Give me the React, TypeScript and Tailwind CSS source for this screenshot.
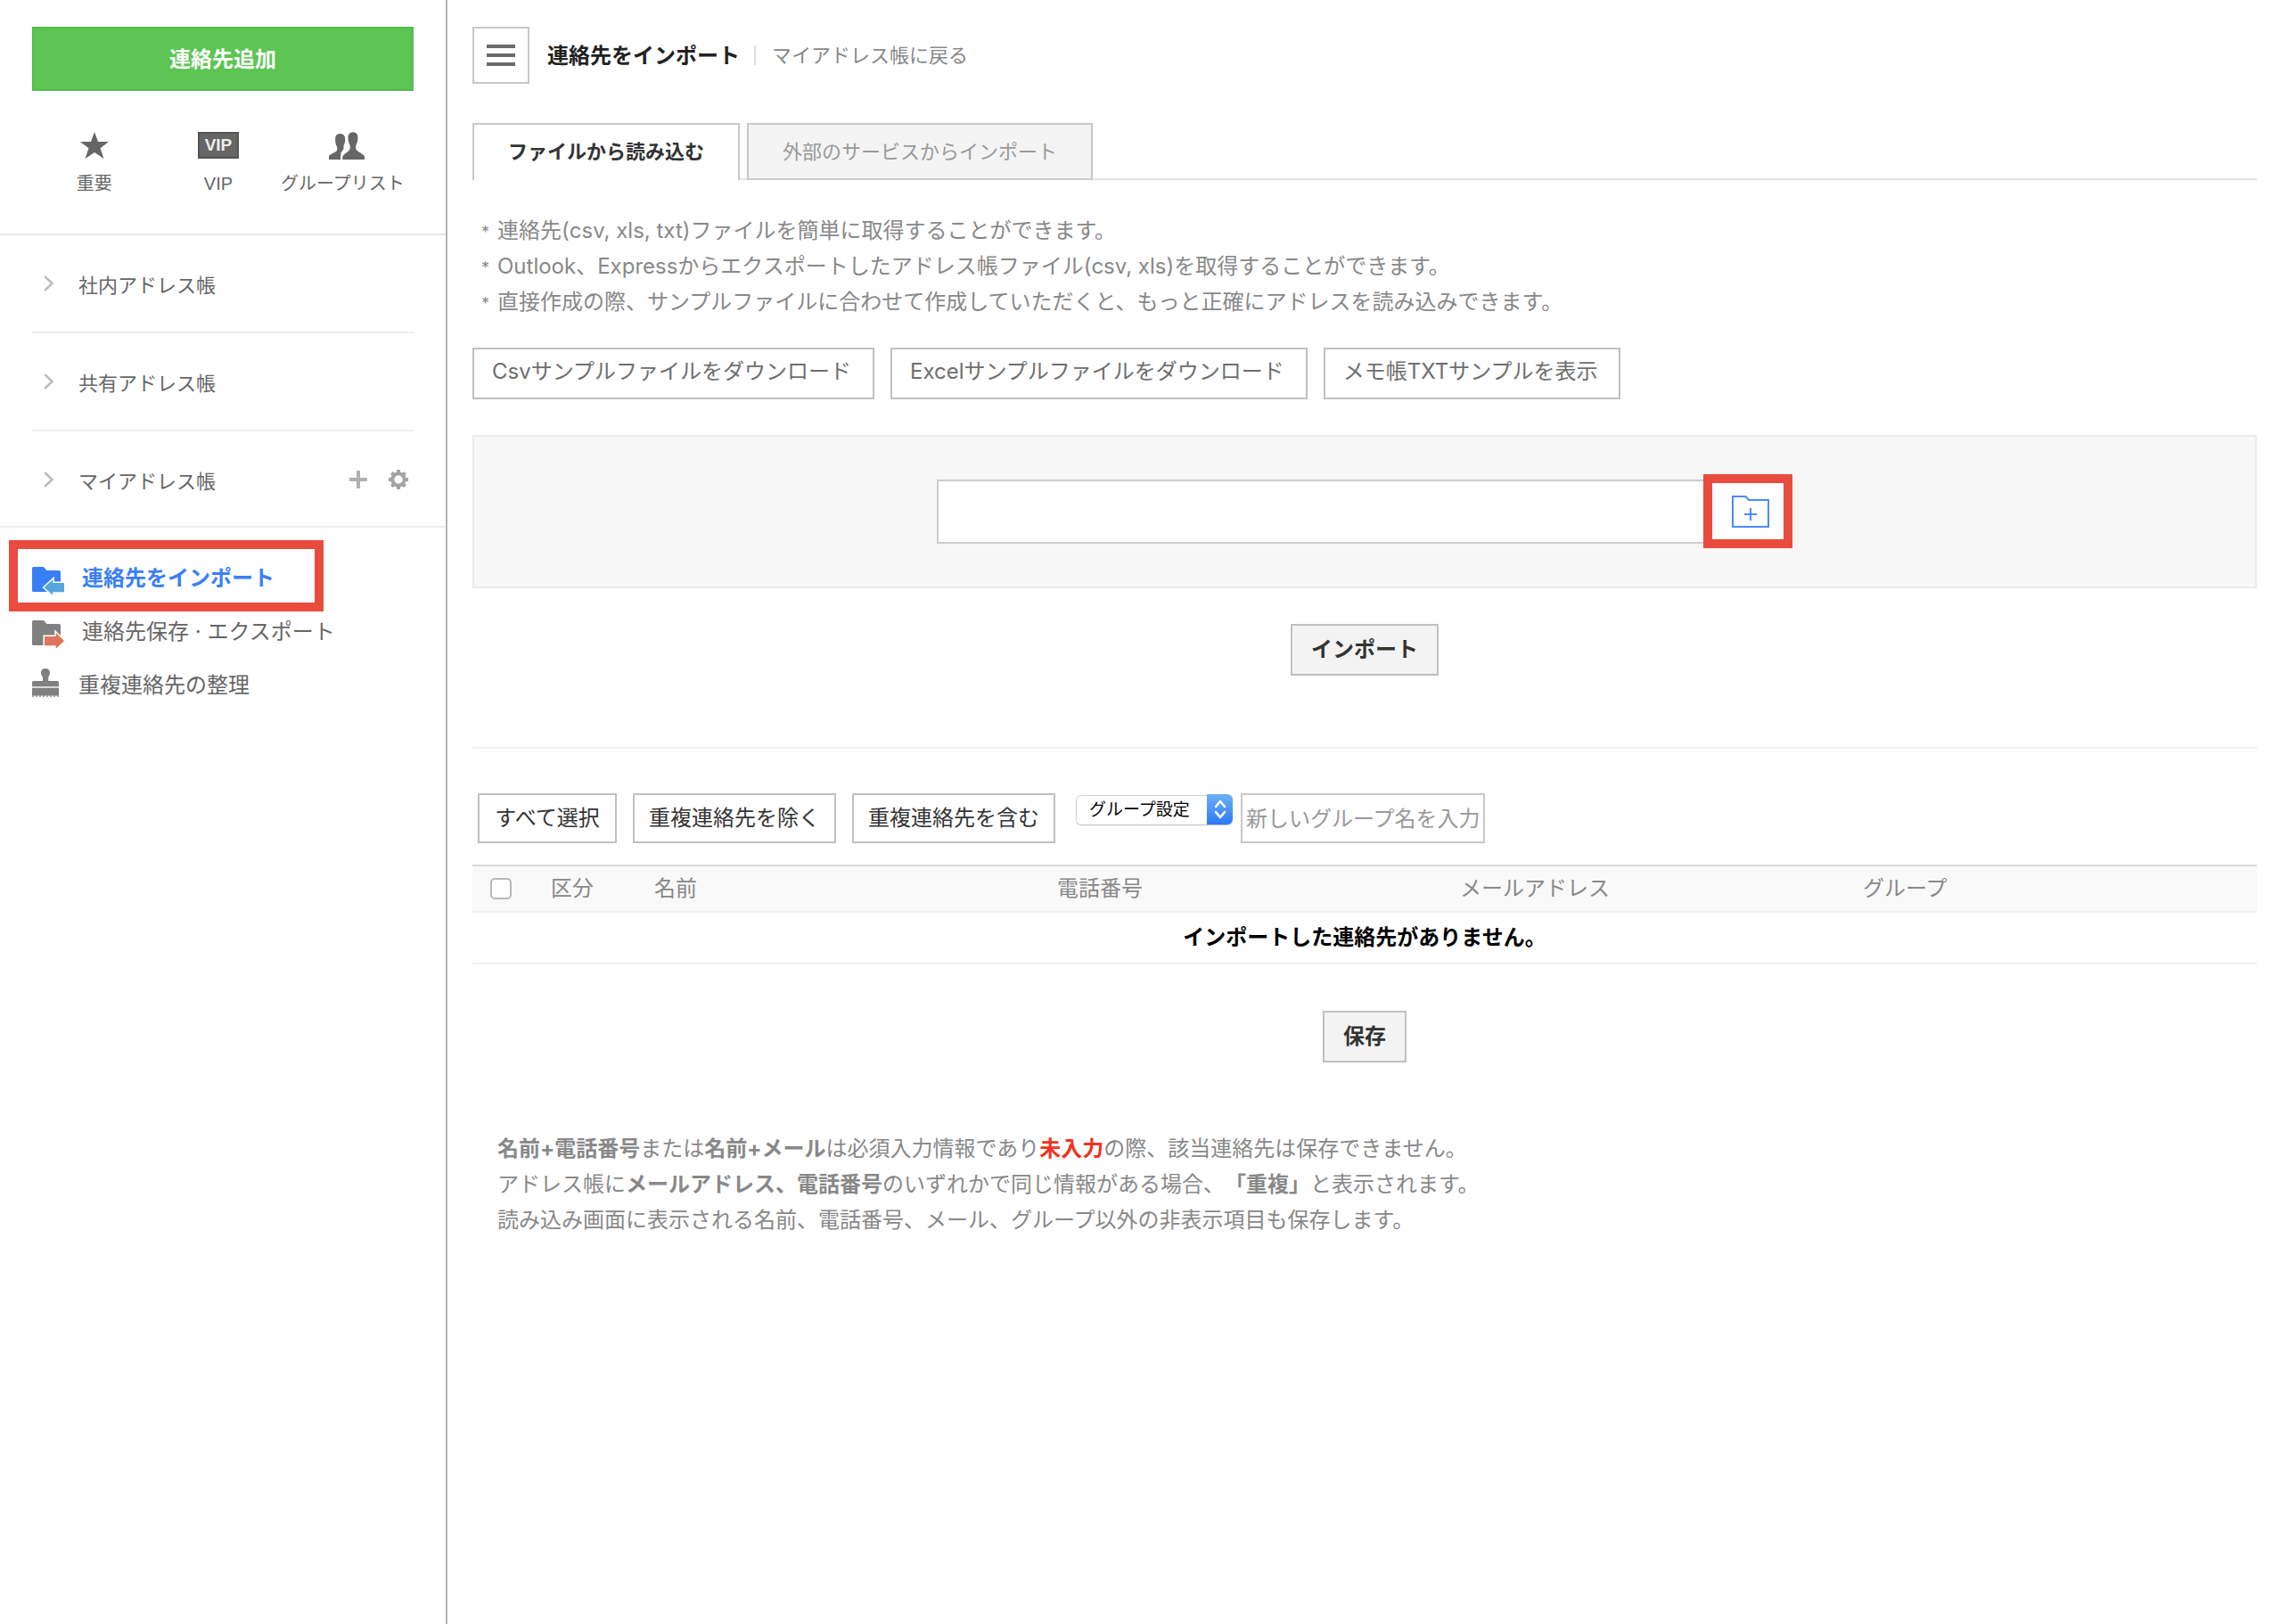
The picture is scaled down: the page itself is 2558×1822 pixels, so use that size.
import React from "react";

const outlineButton =
  "h-[58px] border-2 border-[#c0c0c0] bg-white pb-1 pl-5 pr-6 text-2xl leading-[50px] text-[#6e6e6e] whitespace-nowrap";
const selectionButton =
  "h-14 min-w-[156px] border-2 border-[#c0c0c0] bg-white px-4 text-2xl leading-[52px] text-[#333] whitespace-nowrap";
const solidButton =
  "h-[58px] border-2 border-[#c0c0c0] bg-[#f3f3f3] px-[21px] text-2xl font-bold leading-[54px] text-[#333]";

function StarIcon() {
  return (
    <svg width="32" height="30" viewBox="0 0 32 30" fill="#666" aria-hidden="true">
      <path d="M16 0 20 11H32L22.500 18.200 26.500 30 16 23 5.500 30 9.500 18.200 0 11H12Z" />
    </svg>
  );
}

function GroupIcon() {
  return (
    <svg width="50" height="32" viewBox="0 0 50 32" aria-hidden="true">
      <path
        fill="#666"
        d="M22.500 3C27 3 28.500 6 28.200 10C28 14 27 15 26.500 16.500V20L23.500 24.500L23 32H10V28.500C10.500 26 17 24 18.500 22.500C19.500 21.500 19.500 20 19 17.500C18 16 17.300 14 17.200 11C16.800 6 18 3 22.500 3Z"
      />
      <path
        fill="#666"
        stroke="#fff"
        strokeWidth="1.500"
        d="M37 .5C42 .5 43.500 4 43.200 8.500C43 13 42 14 41 16.500V20C41.500 23 50.500 24.500 51 29V32.800H24.500V29C25 24.500 32.500 23 33 20V16.500C32 14 31 13 30.800 8.500C30.500 4 32 .5 37 .5Z"
      />
    </svg>
  );
}

function ChevronIcon() {
  return (
    <svg width="12" height="20" viewBox="0 0 12 20" fill="none" stroke="#bbb" strokeWidth="2.500" aria-hidden="true">
      <path d="M0 2 8.500 10 0 18" />
    </svg>
  );
}

function PlusIcon() {
  return (
    <svg width="20" height="20" viewBox="0 0 20 20" fill="none" stroke="#b0b0b0" strokeWidth="4" aria-hidden="true">
      <path d="M10 0V20M0 10H20" />
    </svg>
  );
}

function GearIcon() {
  return (
    <svg width="22" height="22" viewBox="0 0 22 22" fill="none" stroke="#a3a3a3" aria-hidden="true">
      <circle cx="11" cy="11" r="6.700" strokeWidth="4" />
      <path
        strokeWidth="4"
        d="M11 0V4M11 18V22M0 11H4M18 11H22M3.400 3.400 6 6M16 16 18.600 18.600M18.600 3.400 16 6M6 16 3.400 18.600"
      />
    </svg>
  );
}

function ImportIcon() {
  return (
    <svg width="36" height="40" viewBox="0 0 36 40" aria-hidden="true">
      <path fill="#3a7ff8" d="M0 9.500Q0 8 1.500 8H13L16.500 12H30.500Q32 12 32 13.500V36H1.500Q0 36 0 34.500Z" />
      <path
        fill="#57a5dd"
        stroke="#fff"
        strokeWidth="1.500"
        d="M12.500 31 24 20.500V25.200H37V37H24V41.500Z"
      />
    </svg>
  );
}

function ExportIcon() {
  return (
    <svg width="36" height="40" viewBox="0 0 36 40" aria-hidden="true">
      <path fill="#808080" d="M0 9.500Q0 8 1.500 8H13L16.500 12H30.500Q32 12 32 13.500V36H1.500Q0 36 0 34.500Z" />
      <path
        fill="#e0745c"
        stroke="#fff"
        strokeWidth="1.500"
        d="M13.200 25.200H26V20L37 31 26 41.500V37H13.200Z"
      />
    </svg>
  );
}

function StampIcon() {
  return (
    <svg width="32" height="40" viewBox="0 0 32 40" fill="#808080" aria-hidden="true">
      <path d="M15 2C18.500 2 20.200 4.500 20 7.500C19.800 9.500 18.500 10.500 18.200 12V16H28.500Q30 16 30 17.500V22H0V17.500Q0 16 1.500 16H12V12C11.500 10.500 10.200 9.500 10 7.500C9.800 4.500 11.500 2 15 2Z" />
      <path fill="#d8d8d8" d="M0 22H30V24H0Z" />
      <path d="M0 24H30V32.500H0Z" />
      <path
        opacity=".7"
        d="M0 32H2V34H0ZM4 32H6V34H4ZM8 32H10V34H8ZM12 32H14V34H12ZM16 32H18V34H16ZM20 32H22V34H20ZM24 32H26V34H24ZM28 32H30V34H28Z"
      />
    </svg>
  );
}

function FolderAddIcon() {
  return (
    <svg width="42" height="36" viewBox="0 0 42 36" fill="none" stroke="#4a8bf8" strokeWidth="2" aria-hidden="true">
      <path d="M1 1H15.500L19 5H41V35H1Z" />
      <path d="M21 14V28M14 21H28" />
    </svg>
  );
}

function QuickLink({ label, children }: { label: string; children: React.ReactNode }) {
  return (
    <a
      href="#"
      className="flex flex-1 flex-col items-center font-['Liberation_Sans','Noto_Sans_CJK_JP',sans-serif] text-xl leading-[30px] text-[#666] whitespace-nowrap"
    >
      <span className="flex h-9 items-center">{children}</span>
      <span className="mt-2.5">{label}</span>
    </a>
  );
}

function BookRow({ label, last, children }: { label: string; last?: boolean; children?: React.ReactNode }) {
  return (
    <li
      className={
        last ? "flex h-[106px] items-center pt-0.5 pl-3.5" : "flex h-[110px] items-center border-b-2 border-[#efefef] pl-3.5"
      }
    >
      <ChevronIcon />
      <a href="#" className="ml-[26px] grow pt-1 text-[22px] leading-8 text-[#666]">
        {label}
      </a>
      {children}
    </li>
  );
}

function Sidebar() {
  return (
    <aside className="w-[502px] shrink-0 border-r-2 border-[#b3b3b5] text-[#666]">
      <div className="px-9 pt-[30px]">
        <button className="h-[72px] w-full border-2 border-[#55bb4c] bg-[#5cc553] pt-0.5 text-2xl font-bold text-white">
          連絡先追加
        </button>
      </div>
      <div className="mt-[43px] flex h-[119px] border-b-2 border-[#e8e8e8] pr-[46px] pl-9">
        <QuickLink label="重要">
          <StarIcon />
        </QuickLink>
        <QuickLink label="VIP">
          <span
            aria-hidden="true"
            className="h-[30px] w-[46px] border-2 border-[#555] bg-[#666] text-center text-[19px] leading-[26px] font-bold text-[#eee]"
          >
            VIP
          </span>
        </QuickLink>
        <QuickLink label="グループリスト">
          <GroupIcon />
        </QuickLink>
      </div>
      <ul className="border-b-2 border-[#efefef] px-9">
        <BookRow label="社内アドレス帳" />
        <BookRow label="共有アドレス帳" />
        <BookRow label="マイアドレス帳" last>
          <button aria-label="グループ追加" className="mr-6">
            <PlusIcon />
          </button>
          <button aria-label="設定" className="mr-1.5">
            <GearIcon />
          </button>
        </BookRow>
      </ul>
      <ul className="px-9 pt-[26px] text-2xl leading-9">
        <li className="relative">
          <a href="#" className="flex h-[60px] items-center gap-5 font-bold text-[#3a7ff8]">
            <ImportIcon />
            <span className="pt-0.5">連絡先をインポート</span>
          </a>
          <span className="pointer-events-none absolute -top-3 -left-[26px] h-20 w-[353px] border-[10px] border-[#e94c3d]" />
        </li>
        <li>
          <a href="#" className="flex h-[60px] items-center gap-5">
            <ExportIcon />
            <span className="pt-0.5">連絡先保存 · エクスポート</span>
          </a>
        </li>
        <li>
          <a href="#" className="flex h-[60px] items-center gap-5">
            <StampIcon />
            <span className="pt-0.5">重複連絡先の整理</span>
          </a>
        </li>
      </ul>
    </aside>
  );
}

function Bullet({ children }: { children: React.ReactNode }) {
  return (
    <li className="flex h-10">
      <span className="w-[18px] pt-0.5 text-lg leading-10" aria-hidden="true">
        *
      </span>
      {children}
    </li>
  );
}

export default function App() {
  return (
    <div
      lang="ja"
      className="flex min-h-screen bg-white font-['Inter','Noto_Sans_CJK_JP',sans-serif] text-2xl text-[#888] [text-spacing-trim:space-all]"
    >
      <Sidebar />
      <main className="min-w-0 grow pt-[30px] pr-[26px] pb-12 pl-7">
        <header className="flex h-16 items-center">
          <button
            aria-label="メニュー"
            className="flex size-16 flex-col items-center justify-center gap-1.5 border-2 border-[#c8c8c8]"
          >
            <span className="h-1 w-8 bg-[#6a6a6a]" />
            <span className="h-1 w-8 bg-[#6a6a6a]" />
            <span className="h-1 w-8 bg-[#6a6a6a]" />
          </button>
          <h1 className="ml-5 pt-0.5 font-bold text-[#222]">連絡先をインポート</h1>
          <span className="ml-4 h-[22px] w-0.5 bg-[#ddd]" />
          <a href="#" className="ml-[18px] pt-0.5 text-[22px]">
            マイアドレス帳に戻る
          </a>
        </header>

        <div
          role="tablist"
          className="mt-11 flex h-16 gap-2 bg-[linear-gradient(#e2e2e2,#e2e2e2)] bg-[length:100%_2px] bg-bottom bg-no-repeat text-[22px]"
        >
          <button
            role="tab"
            aria-selected="true"
            className="border-2 border-b-0 border-[#c8c8c8] bg-white px-[38px] font-bold text-[#333]"
          >
            ファイルから読み込む
          </button>
          <button
            role="tab"
            aria-selected="false"
            className="border-2 border-[#c8c8c8] bg-[#f4f4f4] px-[38px] pt-0.5 text-[#999]"
          >
            外部のサービスからインポート
          </button>
        </div>

        <ul className="mt-[37px] pl-[10px] leading-10">
          <Bullet>連絡先(csv, xls, txt)ファイルを簡単に取得することができます。</Bullet>
          <Bullet>Outlook、Expressからエクスポートしたアドレス帳ファイル(csv, xls)を取得することができます。</Bullet>
          <Bullet>直接作成の際、サンプルファイルに合わせて作成していただくと、もっと正確にアドレスを読み込みできます。</Bullet>
        </ul>

        <div className="mt-[31px] flex gap-[18px]">
          <button className={outlineButton}>Csvサンプルファイルをダウンロード</button>
          <button className={outlineButton}>Excelサンプルファイルをダウンロード</button>
          <button className={outlineButton}>メモ帳TXTサンプルを表示</button>
        </div>

        <div className="mt-10 flex justify-center border-2 border-[#ebebeb] bg-[#f7f7f7] py-12">
          <div className="relative flex h-[72px] w-[960px]">
            <input
              type="text"
              aria-label="ファイル"
              className="min-w-0 grow border-2 border-r-0 border-[#ccc] bg-white px-4 outline-none"
            />
            <button
              aria-label="ファイルを選択"
              className="flex w-[92px] items-center justify-center border-2 border-l-0 border-[#ccc] bg-white"
            >
              <FolderAddIcon />
            </button>
            <span className="pointer-events-none absolute -top-1.5 right-0 h-[83px] w-[100px] border-[10px] border-[#e94c3d]" />
          </div>
        </div>

        <div className="mt-10 flex justify-center border-b-2 border-[#f1f1f1] pb-20">
          <button className={solidButton}>インポート</button>
        </div>

        <div className="mt-[50px] flex items-start pl-1.5">
          <div className="flex gap-[18px]">
            <button className={selectionButton}>すべて選択</button>
            <button className={selectionButton}>重複連絡先を除く</button>
            <button className={selectionButton}>重複連絡先を含む</button>
          </div>
          <div className="relative mt-px ml-[23px] h-[34px] w-44 overflow-hidden rounded-md shadow-[0_1px_1px_#bbb]">
            <select
              aria-label="グループ設定"
              className="size-full appearance-none rounded-md border border-[#d4d4d4] bg-white pl-3.5 text-[19px] leading-8 text-black"
            >
              <option>グループ設定</option>
            </select>
            <span className="pointer-events-none absolute inset-y-0 right-0 flex w-[29px] items-center justify-center bg-linear-to-b from-[#6fb0f7] to-[#2d78f6]">
              <svg
                width="14"
                height="22"
                viewBox="0 0 14 22"
                fill="none"
                stroke="#fff"
                strokeWidth="2.500"
                strokeLinecap="round"
                strokeLinejoin="round"
                aria-hidden="true"
              >
                <path d="M2 8 7 2 12 8M2 14 7 20 12 14" />
              </svg>
            </span>
          </div>
          <input
            type="text"
            aria-label="新しいグループ名"
            placeholder="新しいグループ名を入力"
            className="ml-[9px] h-14 w-[274px] border-2 border-[#c8c8c8] bg-white px-1 text-[#333] outline-none placeholder:text-[#999]"
          />
        </div>

        <table className="mt-6 w-full table-fixed border-collapse text-left">
          <colgroup>
            <col className="w-[78px]" />
            <col className="w-[116px]" />
            <col />
            <col />
            <col />
            <col />
          </colgroup>
          <thead>
            <tr className="h-[52px] border-t-2 border-b-2 border-t-[#d8d8d8] border-b-[#f0f0f0] bg-[#f9f9f9]">
              <th className="pl-5 font-normal">
                <input
                  type="checkbox"
                  aria-label="すべて選択"
                  className="block size-6 appearance-none rounded-[5px] border-2 border-[#b8b8b8] bg-white"
                />
              </th>
              <th className="pl-2.5 font-normal">区分</th>
              <th className="pl-2.5 font-normal">名前</th>
              <th className="pl-2.5 font-normal">電話番号</th>
              <th className="pl-2.5 font-normal">メールアドレス</th>
              <th className="pl-2.5 font-normal">グループ</th>
            </tr>
          </thead>
          <tbody>
            <tr className="h-[58px] border-b-2 border-[#f0f0f0]">
              <td colSpan={6} className="text-center font-bold text-black">
                インポートした連絡先がありません。
              </td>
            </tr>
          </tbody>
        </table>

        <div className="mt-[52px] flex justify-center">
          <button className={solidButton}>保存</button>
        </div>

        <div className="mt-[77px] pl-7 leading-10">
          <p>
            <b>名前+電話番号</b>または<b>名前+メール</b>は必須入力情報であり<b className="text-[#ee3322]">未入力</b>
            の際、該当連絡先は保存できません。
          </p>
          <p>
            アドレス帳に<b>メールアドレス、電話番号</b>のいずれかで同じ情報がある場合、<b>「重複」</b>と表示されます。
          </p>
          <p>読み込み画面に表示される名前、電話番号、メール、グループ以外の非表示項目も保存します。</p>
        </div>
      </main>
    </div>
  );
}
